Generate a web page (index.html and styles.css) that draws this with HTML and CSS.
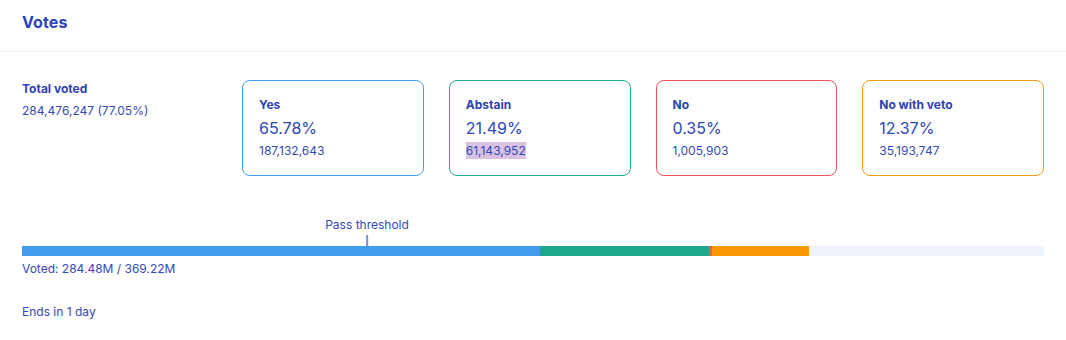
FILE: index.html
```html
<!DOCTYPE html>
<html>
<head>
<meta charset="utf-8">
<link rel="stylesheet" href="styles.css">
</head>
<body>
<div class="panel">
  <div class="header"><h2 class="title">Votes</h2></div>
  <div class="content">
    <div class="summary">
      <div class="total">
        <div class="total-label">Total voted</div>
        <div class="total-value">284,476,247 (77.05%)</div>
      </div>
      <div class="cards">
        <div class="card card-yes">
          <div class="card-label">Yes</div>
          <div class="card-pct">65.78%</div>
          <div class="card-num">187,132,643</div>
        </div>
        <div class="card card-abstain">
          <div class="card-label">Abstain</div>
          <div class="card-pct">21.49%</div>
          <div class="card-num"><span class="selected">61,143,952</span></div>
        </div>
        <div class="card card-no">
          <div class="card-label">No</div>
          <div class="card-pct">0.35%</div>
          <div class="card-num">1,005,903</div>
        </div>
        <div class="card card-veto">
          <div class="card-label">No with veto</div>
          <div class="card-pct">12.37%</div>
          <div class="card-num">35,193,747</div>
        </div>
      </div>
    </div>
    <div class="progress">
      <div class="threshold-area">
        <div class="threshold" style="left: 33.76%">
          <span class="threshold-label">Pass threshold</span>
          <span class="threshold-tick"></span>
        </div>
      </div>
      <div class="bar">
        <div class="seg seg-yes" style="width: 50.67%"></div>
        <div class="seg seg-abstain" style="width: 16.56%"></div>
        <div class="seg seg-no" style="width: 0.27%"></div>
        <div class="seg seg-veto" style="width: 9.53%"></div>
      </div>
      <div class="voted">Voted: 284.48M / 369.22M</div>
    </div>
    <div class="ends">Ends in 1 day</div>
  </div>
</div>
</body>
</html>
```
FILE: styles.css
```css
* { box-sizing: border-box; }
body {
  margin: 0;
  background: #fff;
  font-family: "Inter", "Noto Sans", sans-serif;
  color: #3349b5;
}
.header {
  height: 52px;
  padding: 0 22px;
  border-bottom: 1px solid #eceef2;
  display: flex;
  align-items: center;
}
.title {
  margin: 0 0 8px 0;
  font-size: 16px;
  font-weight: 700;
  color: #2a45be;
  letter-spacing: 0.1px;
}
.content {
  padding: 28px 22px 0 22px;
}
.summary {
  display: flex;
}
.total {
  width: 220px;
  flex: none;
  padding-top: 1px;
}
.total-label {
  font-size: 12px;
  font-weight: 700;
  color: #2a43b0;
  line-height: 16px;
}
.total-value {
  font-size: 12px;
  line-height: 16px;
  margin-top: 6px;
  color: #3349b5;
}
.cards {
  flex: 1;
  display: grid;
  grid-template-columns: repeat(4, 1fr);
  gap: 25px;
}
.card {
  height: 96px;
  border: 1px solid;
  border-radius: 8px;
  padding: 16px 16px 0 16px;
}
.card-yes { border-color: #3f9cef; }
.card-abstain { border-color: #1fa98c; }
.card-no { border-color: #f0535b; }
.card-veto { border-color: #f89a10; }
.card-label {
  font-size: 12px;
  font-weight: 700;
  line-height: 16px;
  color: #2a43b0;
}
.card-pct {
  font-size: 16px;
  line-height: 20px;
  margin-top: 5px;
  color: #2c46b6;
}
.card-num {
  font-size: 12px;
  line-height: 16px;
  margin-top: 5px;
  color: #3349b5;
}
.selected {
  background: #d9c1e3;
  padding: 1px 0;
}
.progress {
  margin-top: 39px;
}
.threshold-area {
  position: relative;
  height: 31px;
}
.threshold {
  position: absolute;
  top: 2px;
  display: flex;
  flex-direction: column;
  align-items: center;
  transform: translateX(-50%);
}
.threshold-label {
  font-size: 12px;
  line-height: 16px;
  color: #3349b5;
  white-space: nowrap;
}
.threshold-tick {
  width: 2px;
  height: 11px;
  margin-top: 2px;
  background: #7d8fd6;
}
.bar {
  height: 10px;
  background: #eff3fb;
  display: flex;
}
.seg { height: 100%; }
.seg-yes { background: #419cf0; }
.seg-abstain { background: #1fa98c; }
.seg-no { background: #f25a5e; }
.seg-veto { background: #fa9806; }
.voted {
  font-size: 12px;
  line-height: 16px;
  margin-top: 5px;
  color: #3349b5;
}
.ends {
  font-size: 12px;
  line-height: 16px;
  margin-top: 27px;
  color: #3349b5;
}
```
